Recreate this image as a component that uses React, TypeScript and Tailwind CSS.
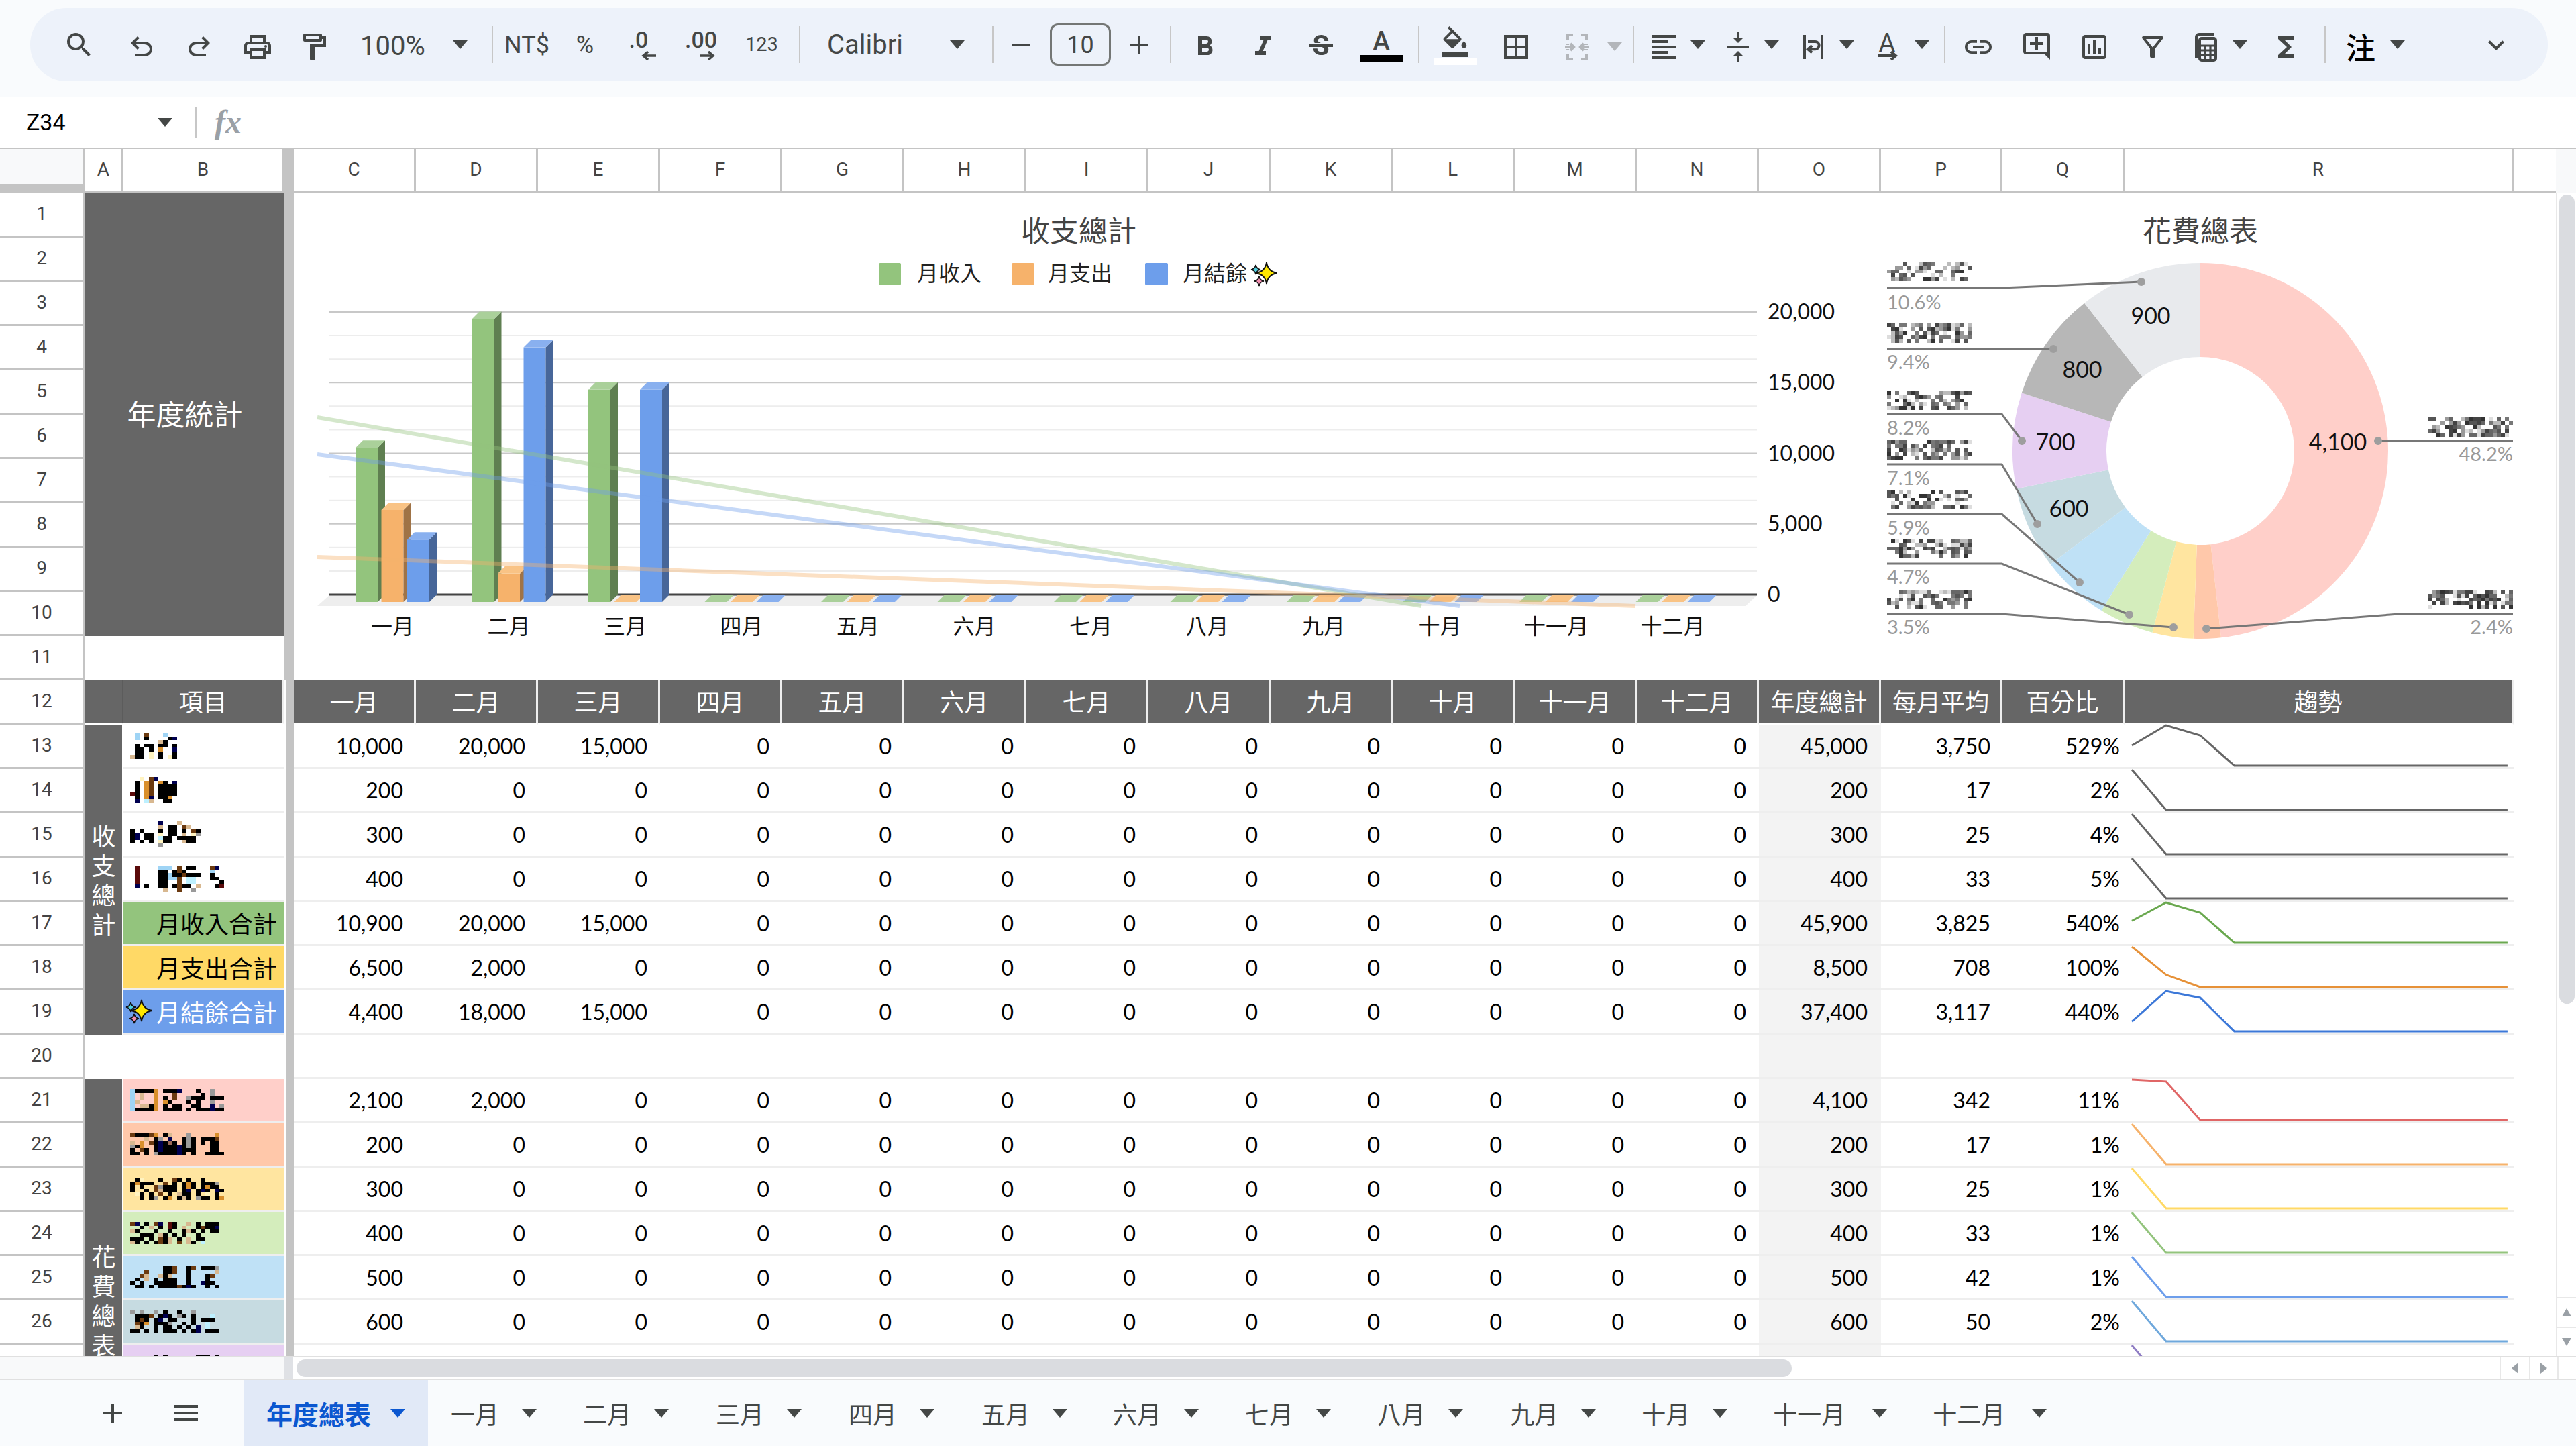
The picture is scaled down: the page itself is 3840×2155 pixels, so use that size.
import React from 'react';
import {
  MdSearch, MdOutlinePrint, MdOutlineFormatPaint, MdRemove, MdAdd, MdFormatBold, MdFormatItalic,
  MdStrikethroughS, MdFormatColorFill, MdBorderAll, MdFormatAlignLeft, MdVerticalAlignCenter, MdLink,
  MdOutlineAddComment, MdOutlineInsertChart, MdOutlineFilterAlt, MdFunctions, MdExpandMore, MdMenu,
} from 'react-icons/md';

const CJK = "font-['Noto_Sans_CJK_TC',sans-serif]";
const RB = "font-['Roboto',sans-serif]";
const ICON = '#444746';
const SHEET = 'grid grid-cols-[127px_57px_240px_14px_repeat(12,182px)_182px_181px_182px_580px_63px]';

function rng(seed: number) {
  let s = seed * 2654435761 >>> 0;
  return () => {
    s = (s + 0x6d2b79f5) >>> 0;
    let t = s;
    t = Math.imul(t ^ (t >>> 15), t | 1);
    t ^= t + Math.imul(t ^ (t >>> 7), t | 61);
    return ((t ^ (t >>> 14)) >>> 0) / 4294967296;
  };
}
const GRAYS = ['#444', '#555', '#666', '#777', '#999', '#bbb', '#ddd', '#333'];

function mosaicRects(seed: number, x: number, y: number, cols: number, rows: number, pw: number, ph: number, palette: string[], density: number) {
  const r = rng(seed);
  const out: React.ReactElement[] = [];
  for (let i = 0; i < cols; i++) {
    for (let j = 0; j < rows; j++) {
      if (r() < density) {
        out.push(<rect key={i + '-' + j} x={x + i * pw} y={y + j * ph} width={pw} height={ph} fill={palette[Math.floor(r() * palette.length)]} />);
      }
    }
  }
  return out;
}

const PIX: Record<string, string> = {
  '#': '#000000', b: '#9fd4f5', n: '#6b3a10', t: '#d8b890', o: '#d98f2b', y: '#fff3c0', g: '#9a9a9a',
  d: '#5a0a0a', v: '#000050', c: '#bdf0ff', r: '#9c6b58',
};

function Mosaic({ rows }: { rows: string[] }) {
  const cols = Math.max(...rows.map((r) => r.length));
  return (
    <svg width={cols * 7} height={rows.length * 5.5} shapeRendering="crispEdges" className="block shrink-0">
      {rows.flatMap((row, j) =>
        row.split('').map((ch, i) =>
          PIX[ch] ? <rect key={i + '-' + j} x={i * 7} y={j * 5.5} width={7} height={5.5} fill={PIX[ch]} /> : null
        )
      )}
    </svg>
  );
}

function Sparkle({ className }: { className: string }) {
  return (
    <svg viewBox="0 0 40 40" className={className}>
      <path d="M8 7Q9 13 15 14Q9 15 8 21Q7 15 1 14Q7 13 8 7z" fill="#4dd0e1" stroke="#111" strokeWidth="1.6" />
      <path d="M13 24Q14 30 20 31Q14 32 13 38Q12 32 6 31Q12 30 13 24z" fill="#f48fb1" stroke="#111" strokeWidth="1.6" />
      <path d="M24 3Q26 17 40 19Q26 21 24 35Q22 21 8 19Q22 17 24 3z" fill="#ffe800" stroke="#111" strokeWidth="1.8" />
    </svg>
  );
}

function Tri({ className = '', color = ICON }: { className?: string; color?: string }) {
  return (
    <svg viewBox="0 0 26 13" className={`w-[26px] h-[13px] shrink-0 block ${className}`}>
      <path d="M2 0H24L13 13z" fill={color} />
    </svg>
  );
}

function Sep({ className }: { className: string }) {
  return <div className={`w-[2px] h-[55px] bg-[#c7c7c7] shrink-0 ${className}`} />;
}

function Slot({ className = '', children }: { className?: string; children: React.ReactNode }) {
  return <div className={`w-[48px] h-[48px] flex items-center justify-center shrink-0 ${className}`}>{children}</div>;
}

function Toolbar() {
  const s = 50;
  return (
    <div className={`ml-[45px] w-[3753px] h-[109px] bg-[#edf2fa] rounded-[54px] flex items-center ${RB} text-[#444746]`}>
      <Slot className="ml-[49px]"><MdSearch size={52} color={ICON} /></Slot>
      <Slot className="ml-[45px] mt-[6px]">
        <svg viewBox="0 -960 960 960" className="w-[48px] h-[48px]" fill={ICON}><path d="M280-200v-80h284q63 0 109.5-40T720-420q0-60-46.5-100T564-560H312l104 104-56 56-200-200 200-200 56 56-104 104h252q97 0 166.5 63T800-420q0 94-69.5 157T564-200H280Z" /></svg>
      </Slot>
      <Slot className="ml-[38px] mt-[6px]">
        <svg viewBox="0 -960 960 960" className="w-[48px] h-[48px]" fill={ICON}><path d="M396-200q-97 0-166.5-63T160-420q0-94 69.5-157T396-640h252L544-744l56-56 200 200-200 200-56-56 104-104H396q-63 0-109.5 40T240-420q0 60 46.5 100T396-280h284v80H396Z" /></svg>
      </Slot>
      <Slot className="ml-[39px] mt-[6px]"><MdOutlinePrint size={s} color={ICON} /></Slot>
      <Slot className="ml-[36px] mt-[6px]"><MdOutlineFormatPaint size={s} color={ICON} /></Slot>
      <div className="ml-[45px] w-[100px] text-[40px] mt-[4px] shrink-0">100%</div>
      <Tri className="ml-[36px]" />
      <Sep className="ml-[34px]" />
      <div className="ml-[17px] w-[67px] text-[36px] shrink-0 whitespace-nowrap">NT$</div>
      <Slot className="ml-[29px] text-[36px]">%</Slot>
      <Slot className="ml-[38px]">
        <div className="flex flex-col items-center w-[48px]">
          <span className="text-[34px] font-medium leading-[30px] mr-[12px]">.0</span>
          <svg viewBox="0 0 22 14" className="w-[22px] h-[14px] ml-[18px] mt-[2px]"><path d="M22 7H6M10 1L3 7l7 6" fill="none" stroke={ICON} strokeWidth="3.5" /></svg>
        </div>
      </Slot>
      <Slot className="ml-[39px]">
        <div className="flex flex-col items-center w-[48px]">
          <span className="text-[34px] font-medium leading-[30px]">.00</span>
          <svg viewBox="0 0 22 14" className="w-[22px] h-[14px] ml-[20px] mt-[2px]"><path d="M0 7H16M12 1l7 6-7 6" fill="none" stroke={ICON} strokeWidth="3.5" /></svg>
        </div>
      </Slot>
      <div className="ml-[42px] w-[47px] text-[29px] shrink-0">123</div>
      <Sep className="ml-[33px]" />
      <div className="ml-[40px] w-[114px] text-[40px] shrink-0">Calibri</div>
      <Tri className="ml-[67px]" />
      <Sep className="ml-[39px]" />
      <Slot className="ml-[17px]"><MdRemove size={s} color={ICON} /></Slot>
      <div className="ml-[19px] w-[91px] h-[63px] rounded-[12px] border-[3px] border-[#747775] flex items-center justify-center text-[36px] shrink-0">10</div>
      <Slot className="ml-[18px]"><MdAdd size={s} color={ICON} /></Slot>
      <Sep className="ml-[22px]" />
      <Slot className="ml-[26px] mt-[6px]"><MdFormatBold size={s} color={ICON} /></Slot>
      <Slot className="ml-[39px] mt-[6px]"><MdFormatItalic size={s} color={ICON} /></Slot>
      <Slot className="ml-[38px] mt-[6px]"><MdStrikethroughS size={s} color={ICON} /></Slot>
      <Slot className="ml-[42px] h-[60px] mt-[4px]">
        <div className="flex flex-col items-center">
          <span className="text-[38px] leading-[34px] font-medium">A</span>
          <div className="w-[63px] h-[11px] bg-black mt-[4px] shrink-0" />
        </div>
      </Slot>
      <Sep className="ml-[31px]" />
      <Slot className="ml-[29px] h-[60px] mt-[2px]">
        <div className="flex flex-col items-center">
          <MdFormatColorFill size={46} color={ICON} className="shrink-0 -mb-[2px]" />
          <div className="w-[63px] h-[11px] bg-white mt-[3px] shrink-0" />
        </div>
      </Slot>
      <Slot className="ml-[43px] mt-[6px]"><MdBorderAll size={52} color={ICON} /></Slot>
      <Slot className="ml-[43px] mt-[6px]">
        <svg viewBox="0 0 24 24" className="w-[50px] h-[50px]" fill="none" stroke="#b3b6ba" strokeWidth="2">
          <path d="M9 3H5v4M15 3h4v4M9 21H5v-4M15 21h4v-4M5 9.5v1M5 13.5v1M19 9.5v1M19 13.5v1" />
          <path d="M3 12h6M7 9.5 9.5 12 7 14.5M21 12h-6M17 9.5 14.5 12 17 14.5" />
        </svg>
      </Slot>
      <Tri className="ml-[19px] mt-[6px]" color="#b3b6ba" />
      <Sep className="ml-[14px]" />
      <Slot className="ml-[21px] mt-[6px]"><MdFormatAlignLeft size={s} color={ICON} /></Slot>
      <Tri className="ml-[13px]" />
      <Slot className="ml-[23px] mt-[6px]"><MdVerticalAlignCenter size={s} color={ICON} /></Slot>
      <Tri className="ml-[13px]" />
      <Slot className="ml-[25px] mt-[6px]">
        <svg viewBox="0 0 24 24" className="w-[48px] h-[48px]" fill="none" stroke={ICON} strokeWidth="2">
          <path d="M5.5 3v18M18.5 3v18" />
          <path d="M8 8h5.5a2.8 2.8 0 0 1 0 5.6H8M11 11l-3 2.6 3 2.6" />
        </svg>
      </Slot>
      <Tri className="ml-[13px]" />
      <Slot className="ml-[23px] mt-[6px]">
        <svg viewBox="0 0 24 24" className="w-[48px] h-[48px]">
          <text x="12" y="15.5" textAnchor="middle" fontFamily="Roboto" fontSize="19" fill={ICON}>A</text>
          <path d="M5 18.5h13M15 15.5l3.5 3-3.5 3" fill="none" stroke={ICON} strokeWidth="2" />
        </svg>
      </Slot>
      <Tri className="ml-[15px]" />
      <Sep className="ml-[20px]" />
      <Slot className="ml-[25px] mt-[6px]"><MdLink size={s} color={ICON} /></Slot>
      <Slot className="ml-[39px] mt-[4px]"><MdOutlineAddComment size={s} color={ICON} /></Slot>
      <Slot className="ml-[38px] mt-[6px]"><MdOutlineInsertChart size={s} color={ICON} /></Slot>
      <Slot className="ml-[39px] mt-[6px]"><MdOutlineFilterAlt size={s} color={ICON} /></Slot>
      <Slot className="ml-[31px] mt-[6px]">
        <svg viewBox="0 0 24 24" className="w-[50px] h-[50px]" fill="none" stroke={ICON} strokeWidth="2">
          <path d="M5 20V4.5A2 2 0 0 1 7 2.5h11" />
          <rect x="7.5" y="5.5" width="12" height="16.5" rx="1.5" />
          <path d="M7.5 11h12M7.5 14.5h12M7.5 18h12M11.5 11v11M15.5 11v11" strokeWidth="1.6" />
        </svg>
      </Slot>
      <Tri className="ml-[14px]" />
      <Slot className="ml-[32px] mt-[6px]"><MdFunctions size={s} color={ICON} /></Slot>
      <Sep className="ml-[33px]" />
      <Slot className={`ml-[28px] mt-[4px] text-[44px] font-medium text-black ${CJK}`}>注</Slot>
      <Tri className="ml-[18px]" />
      <Slot className="ml-[110px]"><MdExpandMore size={52} color={ICON} /></Slot>
    </div>
  );
}

function FormulaBar() {
  return (
    <div className="h-[76px] bg-white flex items-center">
      <div className={`ml-[39px] w-[60px] text-[34px] text-black ${RB}`}>Z34</div>
      <Tri className="ml-[134px]" />
      <div className="ml-[32px] w-[2px] h-[46px] bg-[#c7c7c7]" />
      <div className="ml-[27px] font-['Liberation_Serif',serif] italic font-bold text-[48px] text-[#9aa0a6] leading-none">fx</div>
    </div>
  );
}

const LETTERS = ['C', 'D', 'E', 'F', 'G', 'H', 'I', 'J', 'K', 'L', 'M', 'N', 'O', 'P', 'Q', 'R'];

function ColumnHeader() {
  const c = `flex items-center justify-center pb-[2px] border-r-[3px] border-[#c4c4c4] text-[28px] text-[#444] ${RB}`;
  return (
    <div className={`${SHEET} h-[68px] border-t-[2px] border-b-[3px] border-[#c4c4c4]`}>
      <div className="flex flex-col bg-[#f8f9fa] border-r-[3px] border-[#c4c4c4]">
        <div className="flex-1" />
        <div className="h-[11px] bg-[#c4c4c4]" />
      </div>
      <div className={c}>A</div>
      <div className={`${c} border-r-0`}>B</div>
      <div className="bg-[#c4c4c4]" />
      {LETTERS.map((l) => <div key={l} className={c}>{l}</div>)}
      <div />
    </div>
  );
}

function RowNum({ n }: { n: number }) {
  return (
    <div className={`flex items-center justify-center border-r-[3px] border-b-[3px] border-[#c4c4c4] text-[28px] text-[#444] ${RB} pb-[2px]`}>{n}</div>
  );
}
function Bar() {
  return <div className="border-l-[3px] border-white bg-[#c4c4c4]" />;
}

const MONTHS = ['一月', '二月', '三月', '四月', '五月', '六月', '七月', '八月', '九月', '十月', '十一月', '十二月'];
const fmt = (v: number) => v.toLocaleString('en-US');

function Spark({ data, color }: { data: number[]; color: string }) {
  const max = Math.max(...data);
  const pts = data.map((v, i) => `${11 + 50.9 * i},${61 - (v / max) * 60}`).join(' ');
  return (
    <svg width="580" height="66" className="block overflow-visible">
      <polyline points={pts} fill="none" stroke={color} strokeWidth="3" />
    </svg>
  );
}

interface RowD { n: number; v: number[]; t: string; a: string; p: string; c: string; }

function DataCells({ r }: { r: RowD }) {
  const base = "flex items-center justify-end border-b-[3px] border-[#eee] font-['Lato',sans-serif] text-[32px] text-black";
  const vals = [...r.v, ...Array(9).fill(0)];
  return (
    <>
      {vals.map((v, i) => <div key={i} className={`${base} pr-[19px]`}>{fmt(v)}</div>)}
      <div className={`${base} pr-[20px] bg-[#f3f3f3]`}>{r.t}</div>
      <div className={`${base} pr-[18px]`}>{r.a}</div>
      <div className={`${base} pr-[7px]`}>{r.p}</div>
      <div className="border-b-[3px] border-[#eee]"><Spark data={vals} color={r.c} /></div>
      <div />
    </>
  );
}

const INCOME: (RowD & { m: string[] })[] = [
  { n: 13, v: [10000, 20000, 15000], t: '45,000', a: '3,750', p: '529%', c: '#666666', m: ['.b.n...b..', '.b.#....#v', '......t#..', '.#.##.##.#', '.##.#.o..v', '.##.y.#..#', 't##.y.#.y#'] },
  { n: 14, v: [200, 0, 0], t: '200', a: '17', p: '2%', c: '#666666', m: ['..y.nv....', '.#.on.o#.v', '.#.on.####', '.#.on.####', 'd#.on.####', '.#.ov.##o.', '.v.ct..##.'] },
  { n: 15, v: [300, 0, 0], t: '300', a: '25', p: '4%', c: '#666666', m: ['......v...t.....', '......t.##.nt...', '#.#...#.##.#.n#.', '#v.##.y.##.t.yg.', '#v.##.c##.####..', '#.#.#.y##..t##..', '......g.........'] },
  { n: 16, v: [400, 0, 0], t: '400', a: '33', p: '5%', c: '#666666', m: ['.d....bbb.n.##...nv..', '.d....##.#n#.....b...', '.d....##b##n###..#...', '.d....##bbn.cc...##..', '.d....##..n.cc.....#.', '.v.#..##.#n##.t...#d.', '.......t..n..g.......'] },
];
const TOTALS: (RowD & { bg: string; label: string; white?: boolean })[] = [
  { n: 17, v: [10900, 20000, 15000], t: '45,900', a: '3,825', p: '540%', c: '#6aa84f', bg: 'bg-[#93c47d]', label: '月收入合計' },
  { n: 18, v: [6500, 2000, 0], t: '8,500', a: '708', p: '100%', c: '#e69138', bg: 'bg-[#ffd966]', label: '月支出合計' },
  { n: 19, v: [4400, 18000, 15000], t: '37,400', a: '3,117', p: '440%', c: '#3c78d8', bg: 'bg-[#6d9eeb]', label: '月結餘合計', white: true },
];
const COSTS: (RowD & { bg: string; m: string[] })[] = [
  { n: 21, v: [2100, 2000, 0], t: '4,100', a: '342', p: '11%', c: '#e06666', bg: 'bg-[#ffcfc9]', m: ['b####o.###v...#..g..', 'b.t..o...n.....#.g..', 'b.t..o.#.n..g###.###', 'bt...o.o#...#.#..g..', 'b.tt#o.#.##..##..v.g', 'b####o.####.#.###v##'] },
  { n: 22, v: [200, 0, 0], t: '200', a: '17', p: '1%', c: '#f6b26b', bg: 'bg-[#ffc8aa]', m: ['n###no.#t...g.....o.', '...t.#g.v..#g#.###n.', 't.o.n#v#r#.#g#.#.##.', 'g#o..#v###v#g#...##.', '#.n#.#v###v###...##.', '##.#.g####v#.#..####'] },
  { n: 23, v: [300, 0, 0], t: '300', a: '25', p: '1%', c: '#ffd966', bg: 'bg-[#ffe5a0]', m: ['.#y...#..n#.#..#....', '#o###..n.#.#o#.###g.', '#.#..ng###.#o#.#o##.', '#..#.nt###.#v.#v#.v#', '.y#.#.n.#.t##.#.y.#.', '..#.#g.#o.#t#.g##.#o'] },
  { n: 24, v: [400, 0, 0], t: '400', a: '33', p: '1%', c: '#93c47d', bg: 'bg-[#d4edbc]', m: ['nv.#.nv.d#..t.#.###.', '..#.t.#.d#.t..#n##v.', 't#...#..#..#t#.#.##.', '..###.t#.#.#..#.....', '###.#.n#t.#.t.##....', 't#.#.#n#t.n.t#.c....'] },
  { n: 25, v: [500, 0, 0], t: '500', a: '42', p: '1%', c: '#6d9eeb', bg: 'bg-[#bfe1f6]', m: ['.......##n..#n.###g.', '...n...##n..#.....t.', '..nt..t#t...#...#n..', '.#.t.#.###..#...#...', '#.#..#####..#..v##..', '.##.#.####n#v#..#.#.'] },
  { n: 26, v: [600, 0, 0], t: '600', a: '50', p: '2%', c: '#6fa8dc', bg: 'bg-[#c6dbe1]', m: ['g.g..g.#..#..g.....', '.###n.#v#.g#.#...c.', '.#n#.#v.##...#.###.', '.n#o.###g..#.#..c..', '.t#..#.##.#.#.v.c..', '##.#.#.###.#.#v.###'] },
  { n: 27, v: [700, 0, 0], t: '700', a: '58', p: '2%', c: '#8e7cc3', bg: 'bg-[#e6cff2]', m: ['.....#.#......###.#.', '.##.#.###.#.###.#.#.', '.#.#..#.#.#..#.###..', '#..#.####.##.#.#.#..', '.##.#.#.#..#.#.###..', '#.##.#.###.#.#.#.##.'] },
];

function VerticalLabel({ text, className }: { text: string; className: string }) {
  return (
    <div className={`bg-[#666] border-r-[2px] border-white flex flex-col items-center justify-center text-white text-[36px] pb-[3px] ${CJK} ${className}`}>
      {text.split('').map((ch, i) => <span key={i} className="block h-[44px] leading-[44px]">{ch}</span>)}
    </div>
  );
}

function BarChart() {
  const base = 897, w = 33, d = 11, k = 0.02108;
  const GR = ['#93c47d', '#aad09a', '#5f7f51'];
  const OR = ['#f6b26b', '#f9c385', '#9f7346'];
  const BL = ['#6d9eeb', '#89b0ef', '#476699'];
  const data = [[10900, 6500, 4400], [20000, 2000, 18000], [15000, 0, 15000], ...Array(9).fill([0, 0, 0])];
  const bars: React.ReactElement[] = [];
  data.forEach((g, i) => {
    const gx = 530 + 173.5 * i;
    g.forEach((v: number, j: number) => {
      const x = gx + j * 38.5;
      const [f, t, s] = [GR, OR, BL][j];
      const top = base - v * k;
      bars.push(
        <g key={i + '-' + j}>
          {v > 0 && <rect x={x} y={top} width={w} height={base - top} fill={f} />}
          {v > 0 && <polygon points={`${x + w},${top} ${x + w + d},${top - d} ${x + w + d},${base - d} ${x + w},${base}`} fill={s} />}
          <polygon points={`${x},${top} ${x + d},${top - d} ${x + w + d},${top - d} ${x + w},${top}`} fill={t} />
        </g>
      );
    });
  });
  const lines: React.ReactElement[] = [];
  for (let i = 0; i <= 11; i++) {
    const y = 465 + i * (421 / 12);
    lines.push(<line key={i} x1={491} x2={2619} y1={y} y2={y} stroke={i % 3 === 0 ? '#c8c8c8' : '#ededed'} strokeWidth="2" />);
  }
  const cjk = 'Noto Sans CJK TC';
  return (
    <svg viewBox="438 288 2342 726" className="w-[2342px] h-[726px] block shrink-0">
      <text x="1608" y="360" textAnchor="middle" fontFamily={cjk} fontSize="43" fill="#444">收支總計</text>
      <rect x="1310" y="392" width="33" height="33" rx="2" fill="#93c47d" />
      <text x="1367" y="419" fontFamily={cjk} fontSize="32" fill="#222">月收入</text>
      <rect x="1508" y="392" width="34" height="33" rx="2" fill="#f6b26b" />
      <text x="1562" y="419" fontFamily={cjk} fontSize="32" fill="#222">月支出</text>
      <rect x="1707" y="392" width="34" height="33" rx="2" fill="#6d9eeb" />
      <text x="1763" y="419" fontFamily={cjk} fontSize="32" fill="#222">月結餘</text>
      <svg x="1864" y="388" width="40" height="40" viewBox="0 0 40 40">
        <path d="M8 7Q9 13 15 14Q9 15 8 21Q7 15 1 14Q7 13 8 7z" fill="#4dd0e1" stroke="#111" strokeWidth="1.6" />
        <path d="M13 24Q14 30 20 31Q14 32 13 38Q12 32 6 31Q12 30 13 24z" fill="#f48fb1" stroke="#111" strokeWidth="1.6" />
        <path d="M24 3Q26 17 40 19Q26 21 24 35Q22 21 8 19Q22 17 24 3z" fill="#ffe800" stroke="#111" strokeWidth="1.8" />
      </svg>
      {lines}
      <polygon points="491,887 2619,887 2602,903 473,903" fill="#eeeeee" />
      <line x1="491" x2="2619" y1="886" y2="886" stroke="#444" strokeWidth="3" />
      {bars}
      <line x1="473" y1="622" x2="2119" y2="903" stroke="#93c47d" strokeOpacity="0.4" strokeWidth="6" />
      <line x1="473" y1="677" x2="2176" y2="903" stroke="#6d9eeb" strokeOpacity="0.4" strokeWidth="6" />
      <line x1="473" y1="830" x2="2438" y2="903" stroke="#f6b26b" strokeOpacity="0.4" strokeWidth="6" />
      {['20,000', '15,000', '10,000', '5,000', '0'].map((t, i) => (
        <text key={t} x="2635" y={476 + i * 105.3} fontFamily="Lato" fontSize="32" fill="#111">{t}</text>
      ))}
      {MONTHS.map((m, i) => (
        <text key={m} x={585 + 173.5 * i} y="945" textAnchor="middle" fontFamily={cjk} fontSize="32" fill="#111">{m}</text>
      ))}
    </svg>
  );
}

function PieChart() {
  const cx = 3280, cy = 672, R = 280, r = 140;
  const vals = [4100, 200, 300, 400, 500, 600, 700, 800, 900];
  const cols = ['#ffcfc9', '#ffc8aa', '#ffe5a0', '#d4edbc', '#bfe1f6', '#c6dbe1', '#e6cff2', '#b7b7b7', '#e8eaed'];
  const total = 8500;
  let acc = 0;
  const slices = vals.map((v, i) => {
    const a0 = (acc / total) * Math.PI * 2;
    acc += v;
    const a1 = (acc / total) * Math.PI * 2;
    const p = (rad: number, a: number) => `${cx + rad * Math.sin(a)} ${cy - rad * Math.cos(a)}`;
    const large = a1 - a0 > Math.PI ? 1 : 0;
    return <path key={i} d={`M${p(R, a0)}A${R} ${R} 0 ${large} 1 ${p(R, a1)}L${p(r, a1)}A${r} ${r} 0 ${large} 0 ${p(r, a0)}z`} fill={cols[i]} />;
  });
  const labels = [['4,100', 3485, 659], ['900', 3206, 471], ['800', 3104, 551], ['700', 3064, 659], ['600', 3084, 758]] as const;
  const left = [
    { my: 390, ly: 429, dx: 3192, dy: 420, p: '10.6%', py: 461 },
    { my: 482, ly: 520, dx: 3061, dy: 520, p: '9.4%', py: 550 },
    { my: 582, ly: 617, dx: 3014, dy: 657, p: '8.2%', py: 648 },
    { my: 656, ly: 692, dx: 3037, dy: 781, p: '7.1%', py: 723 },
    { my: 730, ly: 766, dx: 3100, dy: 868, p: '5.9%', py: 797 },
    { my: 803, ly: 840, dx: 3174, dy: 916, p: '4.7%', py: 870 },
    { my: 879, ly: 915, dx: 3240, dy: 935, p: '3.5%', py: 945 },
  ];
  const right = [
    { my: 622, ly: 657, ex: 3545, dx: 3545, dy: 657, p: '48.2%', py: 687 },
    { my: 879, ly: 915, ex: 3576, dx: 3289, dy: 937, p: '2.4%', py: 945 },
  ];
  return (
    <svg viewBox="2780 288 966 726" className="w-[966px] h-[726px] block shrink-0">
      <text x="3280" y="360" textAnchor="middle" fontFamily="Noto Sans CJK TC" fontSize="43" fill="#444">花費總表</text>
      {slices}
      {labels.map(([t, x, y]) => (
        <text key={t} x={x} y={y + 12} textAnchor="middle" fontFamily="Lato" fontSize="34" fill="#111">{t}</text>
      ))}
      {left.map((l, i) => (
        <g key={i}>
          <g shapeRendering="crispEdges">{mosaicRects(100 + i, 2813, l.my, 21, 5, 6, 5.8, GRAYS, 0.62)}</g>
          <polyline points={`2813,${l.ly} 2984,${l.ly} ${l.dx},${l.dy}`} fill="none" stroke="#777" strokeWidth="3" />
          <circle cx={l.dx} cy={l.dy} r="6" fill="#9e9e9e" />
          <text x="2813" y={l.py} fontFamily="Lato" fontSize="29" fill="#999">{l.p}</text>
        </g>
      ))}
      {right.map((l, i) => (
        <g key={i}>
          <g shapeRendering="crispEdges">{mosaicRects(200 + i, 3620, l.my, 21, 5, 6, 5.8, GRAYS, 0.62)}</g>
          <polyline points={`3746,${l.ly} ${l.ex},${l.ly} ${l.dx},${l.dy}`} fill="none" stroke="#777" strokeWidth="3" />
          <circle cx={l.dx} cy={l.dy} r="6" fill="#9e9e9e" />
          <text x="3746" y={l.py} textAnchor="end" fontFamily="Lato" fontSize="29" fill="#999">{l.p}</text>
        </g>
      ))}
    </svg>
  );
}

function Grid() {
  const head = `flex items-center justify-center bg-[#666] text-white text-[36px] pb-[3px] border-r-[3px] border-b-[3px] border-r-[#eee] border-b-white ${CJK}`;
  return (
    <div className="h-[1733px] overflow-hidden">
      <div className={`${SHEET} auto-rows-[66px]`}>
        <RowNum n={1} />
        <div className={`col-span-2 row-span-10 bg-[#666] flex items-center justify-center text-white text-[43px] pb-[5px] ${CJK}`}>年度統計</div>
        <div className="row-span-11 bg-[#c4c4c4]" />
        <div className="col-span-17 row-span-11 flex bg-white">
          <BarChart />
          <PieChart />
        </div>
        {[2, 3, 4, 5, 6, 7, 8, 9, 10].map((n) => <RowNum key={n} n={n} />)}
        <RowNum n={11} />
        <div />
        <div />

        <RowNum n={12} />
        <div className="bg-[#666] border-r-[2px] border-[#5c5c5c] border-b-[3px] border-b-white" />
        <div className={`${head} border-r-0`}>項目</div>
        <Bar />
        {MONTHS.map((m) => <div key={m} className={head}>{m}</div>)}
        <div className={head}>年度總計</div>
        <div className={head}>每月平均</div>
        <div className={head}>百分比</div>
        <div className={`${head} border-r-0`}>趨勢</div>
        <div />

        {INCOME.map((r, i) => (
          <React.Fragment key={r.n}>
            <RowNum n={r.n} />
            {i === 0 && <VerticalLabel text="收支總計" className="row-span-7" />}
            <div className="flex items-center pl-[10px] border-b-[3px] border-[#eee]"><Mosaic rows={r.m} /></div>
            <Bar />
            <DataCells r={r} />
          </React.Fragment>
        ))}
        {TOTALS.map((r) => (
          <React.Fragment key={r.n}>
            <RowNum n={r.n} />
            <div className={`flex items-center justify-between pl-[3px] pr-[11px] pb-[2px] border-b-[3px] border-[#eee] ${r.bg} ${r.white ? 'text-white' : 'text-black'} text-[36px] ${CJK}`}>
              {r.white ? <Sparkle className="w-[40px] h-[40px] shrink-0" /> : <span />}
              <span>{r.label}</span>
            </div>
            <Bar />
            <DataCells r={r} />
          </React.Fragment>
        ))}

        <RowNum n={20} />
        <div />
        <div />
        <Bar />
        {Array.from({ length: 12 }).map((_, i) => <div key={i} className="border-b-[3px] border-[#eee]" />)}
        <div className="bg-[#f3f3f3] border-b-[3px] border-[#eee]" />
        <div className="border-b-[3px] border-[#eee]" />
        <div className="border-b-[3px] border-[#eee]" />
        <div className="border-b-[3px] border-[#eee]" />
        <div />

        {COSTS.map((r, i) => (
          <React.Fragment key={r.n}>
            <RowNum n={r.n} />
            {i === 0 && <VerticalLabel text="花費總表" className="row-span-10" />}
            <div className={`flex items-center pl-[10px] border-b-[3px] border-[#eee] ${r.bg}`}><Mosaic rows={r.m} /></div>
            <Bar />
            <DataCells r={r} />
          </React.Fragment>
        ))}
      </div>
    </div>
  );
}

function VerticalScroll() {
  return (
    <div className="w-[30px] flex flex-col shrink-0">
      <div className="h-[68px] bg-[#f8f9fa] border-t-[2px] border-[#c4c4c4]" />
      <div className="flex-1 flex flex-col bg-white border-l-[2px] border-[#e8e8e8] overflow-hidden">
        <div className="ml-[3px] mt-[2px] w-[23px] h-[1206px] rounded-full bg-[#dadce0]" />
        <div className="flex-1" />
        <div className="h-[44px] border-t-[2px] border-[#e8e8e8] flex items-center justify-center">
          <svg viewBox="0 0 14 12" className="w-[14px] h-[12px]"><path d="M7 0l7 12H0z" fill="#9aa0a6" /></svg>
        </div>
        <div className="h-[44px] border-t-[2px] border-[#e8e8e8] flex items-center justify-center">
          <svg viewBox="0 0 14 12" className="w-[14px] h-[12px]"><path d="M0 0h14L7 12z" fill="#9aa0a6" /></svg>
        </div>
      </div>
    </div>
  );
}

function HorizontalScroll() {
  return (
    <div className="h-[34px] flex border-t-[2px] border-[#e0e0e0] bg-white">
      <div className="w-[424px] bg-[#f8f9fa] shrink-0" />
      <div className="w-[13px] bg-[#dfe1e5] shrink-0" />
      <div className="ml-[5px] mt-[3px] w-[2229px] h-[26px] rounded-full bg-[#dadce0] shrink-0" />
      <div className="ml-[1055px] w-[44px] border-l-[2px] border-[#e8e8e8] flex items-center justify-center">
        <svg viewBox="0 0 10 16" className="w-[10px] h-[16px]"><path d="M10 0v16L0 8z" fill="#9aa0a6" /></svg>
      </div>
      <div className="w-[44px] border-l-[2px] border-r-[2px] border-[#e8e8e8] flex items-center justify-center">
        <svg viewBox="0 0 10 16" className="w-[10px] h-[16px]"><path d="M0 0v16L10 8z" fill="#9aa0a6" /></svg>
      </div>
    </div>
  );
}

function Tab({ label, className = '', gap = 'gap-[32px]' }: { label: string; className?: string; gap?: string }) {
  return (
    <div className={`flex items-center ${gap} ${className} shrink-0`}>
      <span className="whitespace-nowrap">{label}</span>
      <Tri />
    </div>
  );
}

function Tabs() {
  return (
    <div className={`h-[100px] bg-[#f9fbfd] border-t-[2px] border-[#e0e0e0] flex items-center text-[36px] text-[#444746] ${CJK}`}>
      <div className="ml-[144px] w-[48px] flex justify-center"><MdAdd size={52} color={ICON} /></div>
      <div className="ml-[61px] w-[48px] flex justify-center"><MdMenu size={52} color={ICON} /></div>
      <div className="ml-[63px] w-[274px] self-stretch bg-[#e1e9f7] flex items-center text-[#0b57d0] font-bold text-[39px] pl-[33px] gap-[27px]">
        <span className="whitespace-nowrap">年度總表</span>
        <Tri color="#0b57d0" />
      </div>
      <Tab label="一月" className="ml-[34px]" />
      <Tab label="二月" className="ml-[67px]" />
      <Tab label="三月" className="ml-[68px]" />
      <Tab label="四月" className="ml-[68px]" />
      <Tab label="五月" className="ml-[68px]" />
      <Tab label="六月" className="ml-[66px]" />
      <Tab label="七月" className="ml-[67px]" />
      <Tab label="八月" className="ml-[67px]" />
      <Tab label="九月" className="ml-[68px]" />
      <Tab label="十月" className="ml-[66px]" />
      <Tab label="十一月" className="ml-[66px]" gap="gap-[38px]" />
      <Tab label="十二月" className="ml-[66px]" gap="gap-[38px]" />
    </div>
  );
}

export default function App() {
  return (
    <div className="w-[3840px] h-[2155px] flex flex-col overflow-hidden bg-white">
      <div className="h-[144px] bg-[#f9fbfd] pt-[12px] shrink-0"><Toolbar /></div>
      <FormulaBar />
      <div className="flex h-[1801px] shrink-0">
        <div className="w-[3810px] shrink-0">
          <ColumnHeader />
          <Grid />
        </div>
        <VerticalScroll />
      </div>
      <HorizontalScroll />
      <Tabs />
    </div>
  );
}
